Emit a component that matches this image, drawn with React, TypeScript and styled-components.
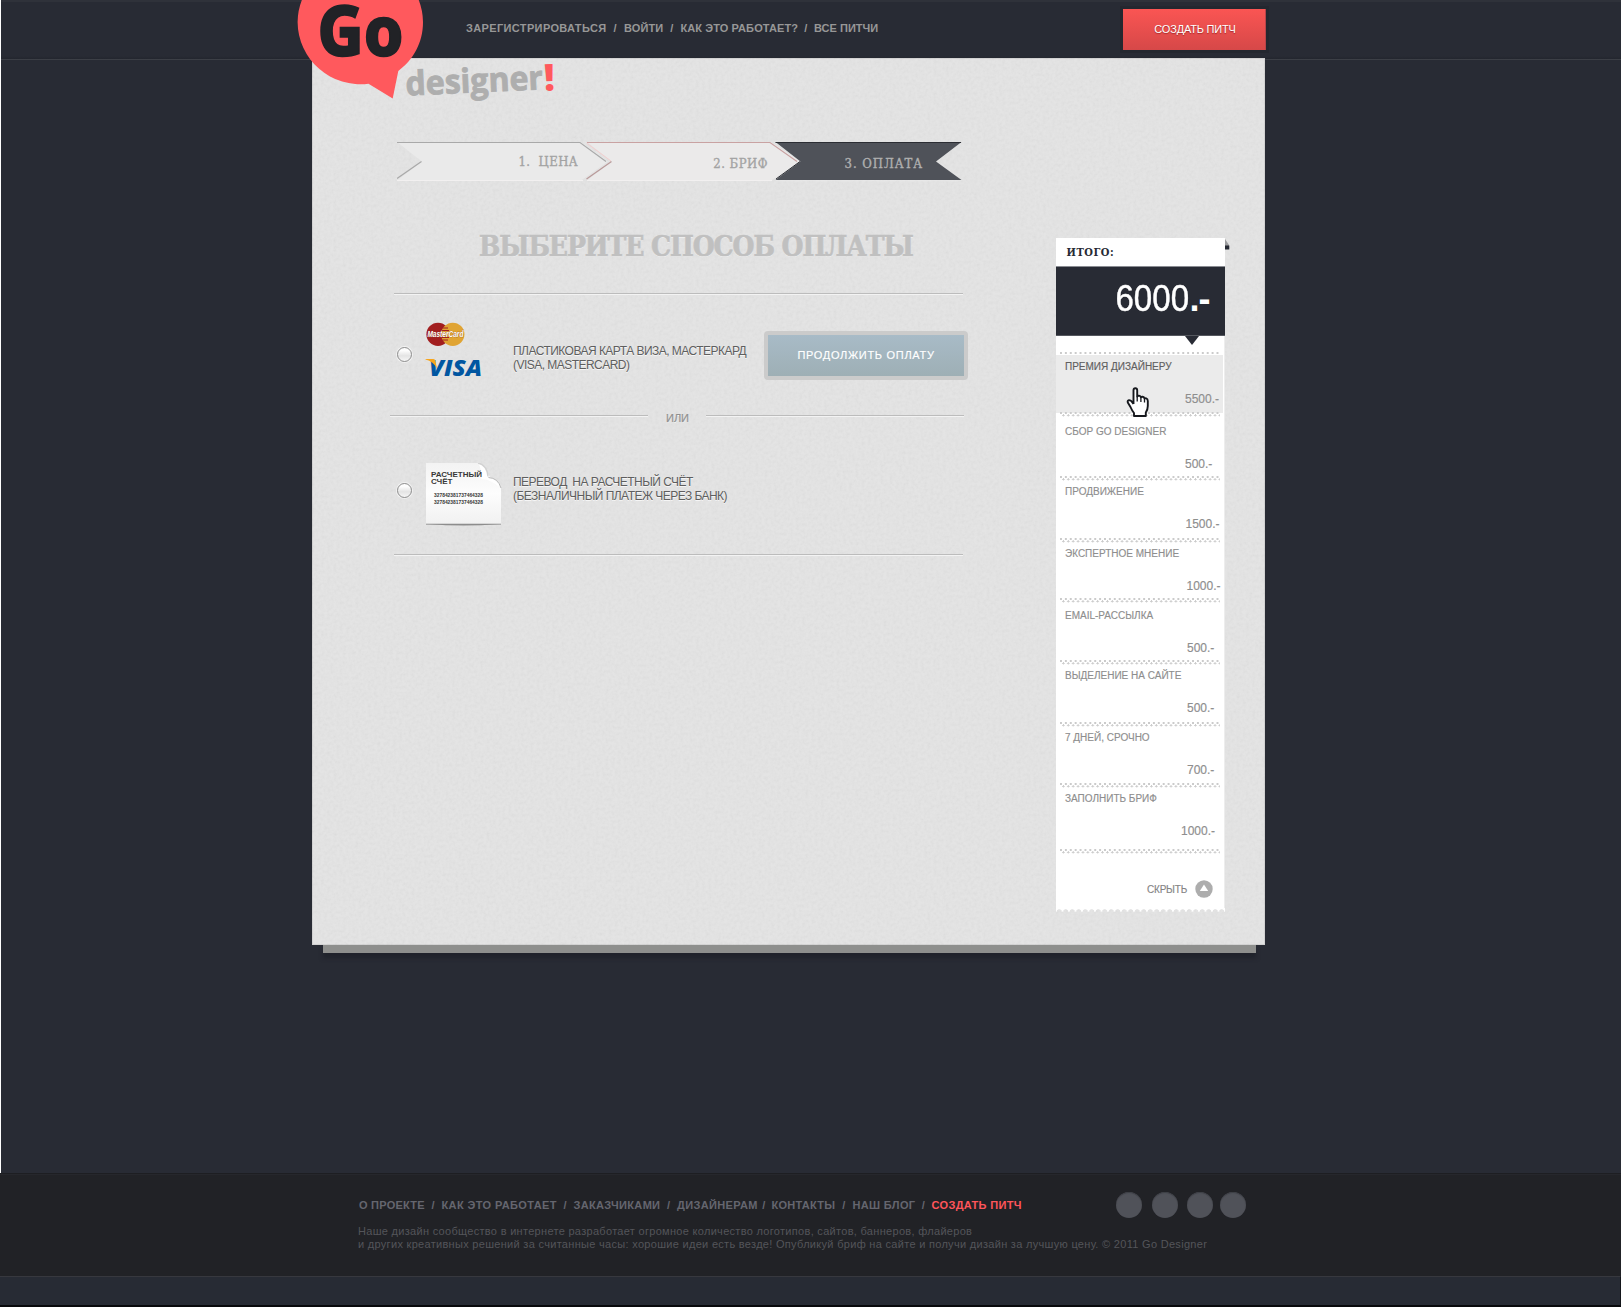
import { Fragment } from "react";
import styled, { createGlobalStyle, css } from "styled-components";

const SANS = `"Liberation Sans", Arial, sans-serif`;
const SLAB = `"DejaVu Serif Condensed", "DejaVu Serif", Rockwell, serif`;

const GlobalStyle = createGlobalStyle`
  *, *::before, *::after { box-sizing: border-box; }
  body {
    margin: 0;
    background: #272b34;
    font-family: ${SANS};
    overflow: hidden;
  }
`;

const Page = styled.div`
  width: 1621px;
  height: 1307px;
  display: flex;
  flex-direction: column;
  overflow: hidden;
`;

const Upper = styled.div`
  height: 1173px;
  flex: none;
  border-left: 1px solid #fff;
  background: #282b34;
`;

/* ---------- header ---------- */

const Header = styled.header`
  position: relative;
  height: 60px;
  display: flex;
  align-items: flex-start;
  padding-left: 465px;
  border-top: 2px solid #2f323a;
  border-bottom: 1px solid #3c3f46;
  background: linear-gradient(#282b34 54px, #23262e);
`;

const TopNav = styled.nav`
  display: flex;
  width: 657px;
  padding-top: 18px;
`;

const NavItem = styled.a<{ $w: number; $ls: number; $tone: string }>`
  width: ${(p) => p.$w}px;
  flex: none;
  font: bold 11px/16px ${SANS};
  letter-spacing: ${(p) => p.$ls}px;
  color: ${(p) => p.$tone};
  white-space: nowrap;
`;

const Slash = styled.span<{ $w: number; $tone: string }>`
  width: ${(p) => p.$w}px;
  flex: none;
  text-align: center;
  font: bold 11px/16px ${SANS};
  color: ${(p) => p.$tone};
`;

const CreateButton = styled.button`
  width: 143px;
  height: 41px;
  margin-top: 7px;
  padding: 0 0 1px 1px;
  border: 0;
  background: linear-gradient(#fa5553, #d64848);
  box-shadow: 0 0 0 3px #24272f, inset -1px 0 #b94448;
  color: #fff;
  font: 11px/14px ${SANS};
  letter-spacing: -0.2px;
  text-shadow: 0 1px 1px rgba(120, 20, 20, 0.6);
`;

const Logo = styled.svg`
  position: absolute;
  left: 279px;
  top: -2px;
  z-index: 3;
  overflow: visible;
`;

/* ---------- paper ---------- */

const Sheet = styled.main`
  position: relative;
  z-index: 1;
  display: flex;
  width: 953px;
  height: 887px;
  margin: -2px 0 0 311px;
  background: #e3e3e3;
  box-shadow: inset 0 0 0 1px #d2d2d2;
`;

const Grain = styled.svg`
  position: absolute;
  inset: 0;
  width: 100%;
  height: 100%;
  opacity: 0.06;
`;

const SheetFold = styled.div`
  width: 933px;
  height: 8px;
  margin-left: 322px;
  background: #8e8f8d;
  box-shadow: 0 5px 4px #20232b;
`;

const Payment = styled.section`
  position: relative;
  width: 580px;
  margin: 83px 0 0 78px;
`;

const Steps = styled.div`
  position: relative;
  display: flex;
  height: 40px;
  margin-left: 7px;
`;

const Ribbon = styled.svg`
  position: absolute;
  left: 0;
  top: 0;
`;

const Step = styled.div<{ $w: number; $end: number; $top: number; $ls: number; $active?: boolean }>`
  position: relative;
  width: ${(p) => p.$w}px;
  padding: ${(p) => p.$top}px ${(p) => p.$end}px 0 0;
  text-align: right;
  white-space: pre;
  font: 13px/16px ${SLAB};
  letter-spacing: ${(p) => p.$ls}px;
  color: ${(p) => (p.$active ? "#b0b0b0" : "#a3a3a3")};
  -webkit-text-stroke: 0.35px;
`;

const Title = styled.h1`
  margin: 50px 0 0 89px;
  font: bold 28px/32px ${SLAB};
  letter-spacing: -1.08px;
  white-space: nowrap;
  color: #c0c0c0;
  -webkit-text-stroke: 0.6px #c0c0c0;
  text-shadow: 0 1px 0 #f1f1f1;
`;

const rule = css`
  height: 2px;
  background: linear-gradient(#bcbcbc 50%, #f3f3f3 50%);
`;

const Rule = styled.div<{ $top?: number }>`
  ${rule}
  width: 569px;
  margin: ${(p) => p.$top ?? 0}px 0 0 4px;
`;

const OrRow = styled.div`
  display: flex;
  align-items: center;
  width: 574px;
  height: 14px;
  &::before {
    content: "";
    ${rule}
    width: 258px;
  }
  &::after {
    content: "";
    ${rule}
    width: 258px;
  }
`;

const OrText = styled.span`
  flex: 1;
  padding: 4px 0 0 1px;
  text-align: center;
  font: 11px/14px ${SANS};
  color: #909090;
  -webkit-text-stroke: 0.25px;
  text-shadow: 0 1px 0 #fff;
`;

const Option = styled.label<{ $h: number; $top: number }>`
  display: grid;
  grid-template-columns: 29px 87px 251px 204px;
  align-items: start;
  height: ${(p) => p.$h}px;
  padding: ${(p) => p.$top}px 0 0 7px;
`;

const Radio = styled.span<{ $top: number }>`
  width: 15px;
  height: 15px;
  margin-top: ${(p) => p.$top}px;
  border: 1px solid #8f8f8f;
  border-radius: 50%;
  background: linear-gradient(#fdfdfd 20%, #e4e4e4 60%, #f6f6f6);
  box-shadow: 0 0 0 1px rgba(255, 255, 255, 0.55);
`;

const OptionText = styled.span<{ $top: number }>`
  margin-top: ${(p) => p.$top}px;
  white-space: pre;
  font: 12px/14px ${SANS};
  letter-spacing: -0.53px;
  color: #5e5e5e;
  text-shadow: 0 1px 0 #f6f6f6;
`;

const PayButton = styled.button`
  width: 204px;
  height: 49px;
  margin-top: 9px;
  padding: 0 0 1px;
  border: 4px solid #cbcbcb;
  border-radius: 4px;
  background: linear-gradient(#a8bbc7, #9eafb5) padding-box;
  color: #fff;
  font: 11px/14px ${SANS};
  letter-spacing: 0.7px;
  -webkit-text-stroke: 0.15px;
`;

/* ---------- receipt ---------- */

const Receipt = styled.aside`
  position: relative;
  width: 169.5px;
  height: 674px;
  margin: 180px 0 0 85.5px;
`;

const Fold = styled.svg`
  position: absolute;
  left: 169.5px;
  top: 1px;
`;

const ReceiptHead = styled.div`
  height: 28px;
  padding: 8px 0 0 11px;
  background: #fff;
  font: bold 11px/14px ${SLAB};
  letter-spacing: 0.55px;
  color: #272a34;
`;

const Total = styled.div`
  position: relative;
  display: flex;
  justify-content: flex-end;
  height: 70px;
  padding: 13px 15.5px 0 0;
  background: #282b34;
  box-shadow: inset 0 1px #8a8c92, inset 0 -1px #55585f;
  color: #fff;
  font: 36px/40px ${SANS};
  &::after {
    content: "";
    position: absolute;
    right: 26px;
    top: 70px;
    border: solid transparent;
    border-width: 9px 7px 0;
    border-top-color: #282b34;
    z-index: 2;
  }
`;

const TotalSum = styled.span`
  transform: scaleX(0.92);
  transform-origin: right;
  -webkit-text-stroke: 0.4px;
`;

const TotalTail = styled.b`
  letter-spacing: -1px;
`;

const ReceiptBody = styled.div`
  height: 572px;
  padding-top: 16px;
  background: #fff;
  border-right: 1px solid #ededed;
`;

const Dots = styled.div<{ $single?: boolean }>`
  position: relative;
  z-index: 1;
  flex: none;
  width: 160px;
  height: ${(p) => (p.$single ? 2 : 5)}px;
  margin: ${(p) => (p.$single ? "0 0 -2px" : "-1px 0 -4px")} 4.5px;
  background:
    radial-gradient(circle at 1px 1px, #cbcbcb 0.9px, transparent 1.3px) 0 0 / 4.9px 5px,
    radial-gradient(circle at 3.4px 3.4px, #cbcbcb 0.9px, transparent 1.3px) 0 0 / 4.9px 5px;
`;

const Line = styled.div<{ $h: number; $hot?: boolean }>`
  display: flex;
  flex-direction: column;
  width: 167px;
  height: ${(p) => p.$h}px;
  background: ${(p) => (p.$hot ? "linear-gradient(#fff 3px, #ebebeb 3px)" : "none")};
`;

const LineLabel = styled.span<{ $top: number; $hot?: boolean }>`
  margin: ${(p) => p.$top}px 0 0 9.5px;
  font: 10px/12px ${SANS};
  color: ${(p) => (p.$hot ? "#606060" : "#8e8e8e")};
  -webkit-text-stroke: 0.15px;
  white-space: nowrap;
`;

const LinePrice = styled.span<{ $left: number }>`
  margin: 19px 0 0 ${(p) => p.$left}px;
  font: 12px/14px ${SANS};
  color: #8e8e8e;
  -webkit-text-stroke: 0.15px;
  white-space: nowrap;
`;

const HideRow = styled.button`
  display: flex;
  align-items: center;
  gap: 7.5px;
  height: 20px;
  margin: 29px 0 0 91.5px;
  padding: 0;
  border: 0;
  background: none;
  font: 10px/12px ${SANS};
  letter-spacing: -0.2px;
  color: #858585;
  -webkit-text-stroke: 0.15px;
`;

const HideLabel = styled.span`
  padding-top: 2px;
`;

const TornEdge = styled.div`
  height: 4px;
  background: radial-gradient(circle at 3.2px 4px, transparent 2.4px, #fff 3.1px) 0 0 / 6.5px 4px;
`;

const Pointer = styled.svg`
  position: absolute;
  left: 70.5px;
  top: 149px;
  z-index: 3;
`;

/* ---------- footer ---------- */

const Footer = styled.footer`
  display: flex;
  height: 103px;
  flex: none;
  padding-left: 358px;
  background: #212226;
  border-top: 1px solid #1d1e22;
  box-shadow: inset 0 1px #26272c;
`;

const FooterInfo = styled.div`
  width: 757.5px;
  padding-top: 23px;
`;

const FooterNav = styled.nav`
  display: flex;
  padding-left: 1px;
`;

const About = styled.p`
  margin: 12px 0 0;
  font: 11px/13px ${SANS};
  letter-spacing: 0.302px;
  color: #54555a;
  white-space: nowrap;
`;

const Socials = styled.div`
  display: flex;
  padding-top: 17.5px;
`;

const Social = styled.a<{ $gap: number }>`
  width: 26px;
  height: 26px;
  margin-left: ${(p) => p.$gap}px;
  border-radius: 50%;
  background: #505259;
  box-shadow: inset 0 1px 1px #3c3e44;
`;

const BottomBar = styled.div`
  height: 31px;
  background: #272b34;
  border-top: 1px solid #37383e;
  border-bottom: 2px solid #08090c;
  border-right: 1px solid #14161b;
`;

/* ---------- data ---------- */

type NavEntry = { text: string; w: number; ls: number; sep?: number; accent?: boolean };

const topNav: NavEntry[] = [
  { text: "ЗАРЕГИСТРИРОВАТЬСЯ", w: 140, ls: 0.36, sep: 18 },
  { text: "ВОЙТИ", w: 39, ls: 0.1, sep: 17.5 },
  { text: "КАК ЭТО РАБОТАЕТ?", w: 117, ls: 0.1, sep: 16.5 },
  { text: "ВСЕ ПИТЧИ", w: 65, ls: 0.03 },
];

const footerNav: NavEntry[] = [
  { text: "О ПРОЕКТЕ", w: 65.5, ls: 0.23, sep: 17 },
  { text: "КАК ЭТО РАБОТАЕТ", w: 115, ls: 0.39, sep: 17 },
  { text: "ЗАКАЗЧИКАМИ", w: 86.5, ls: 0.32, sep: 17 },
  { text: "ДИЗАЙНЕРАМ", w: 79, ls: 0.36, sep: 15.5 },
  { text: "КОНТАКТЫ", w: 63.5, ls: 0.26, sep: 17.5 },
  { text: "НАШ БЛОГ", w: 62.5, ls: 0.34, sep: 16.5 },
  { text: "СОЗДАТЬ ПИТЧ", w: 92, ls: 0.34, accent: true },
];

const lines = [
  { label: "ПРЕМИЯ ДИЗАЙНЕРУ", price: "5500.-", h: 61, top: 9, left: 129.5, hot: true },
  { label: "СБОР GO DESIGNER", price: "500.-", h: 64, top: 13, left: 129.5 },
  { label: "ПРОДВИЖЕНИЕ", price: "1500.-", h: 62, top: 9, left: 130 },
  { label: "ЭКСПЕРТНОЕ МНЕНИЕ", price: "1000.-", h: 60, top: 9, left: 131 },
  { label: "EMAIL-РАССЫЛКА", price: "500.-", h: 62, top: 11, left: 131.5 },
  { label: "ВЫДЕЛЕНИЕ НА САЙТЕ", price: "500.-", h: 62, top: 9, left: 131.5 },
  { label: "7 ДНЕЙ, СРОЧНО", price: "700.-", h: 61, top: 9, left: 131.5 },
  { label: "ЗАПОЛНИТЬ БРИФ", price: "1000.-", h: 66, top: 9, left: 125.5 },
];

function NavList({ items, tone, accent }: { items: NavEntry[]; tone: string; accent?: string }) {
  return (
    <>
      {items.map((item) => (
        <Fragment key={item.text}>
          <NavItem $w={item.w} $ls={item.ls} $tone={item.accent && accent ? accent : tone}>
            {item.text}
          </NavItem>
          {item.sep && (
            <Slash $w={item.sep} $tone={tone}>
              /
            </Slash>
          )}
        </Fragment>
      ))}
    </>
  );
}

function GoLogo() {
  return (
    <Logo width="300" height="110" viewBox="280 0 300 110">
      <path d="M360.3 -40A62.7 62.7 0 0 1 423 22C423 43 413 60 398.3 71L392.7 98.5 368.5 83.7A62.7 62.7 0 0 1 297.6 22 62.7 62.7 0 0 1 360.3 -40Z" fill="#ff595d" />
      <text x="317.5" y="56" fontFamily="Noto Sans, sans-serif" fontWeight="800" fontSize="70" textLength="86" lengthAdjust="spacingAndGlyphs" fill="#212226" stroke="#212226" strokeWidth="1.6">
        Go
      </text>
      <g transform="rotate(-2.6 406 95)">
        <text x="406" y="95.6" fontFamily="Open Sans, sans-serif" fontWeight="700" fontSize="33.5" textLength="137.5" lengthAdjust="spacingAndGlyphs" fill="#aeaeae" stroke="#aeaeae" strokeWidth="0.9">
          designer
        </text>
        <text x="544.5" y="97" fontFamily="Open Sans, sans-serif" fontWeight="800" fontSize="37" fill="#ff595d">
          !
        </text>
      </g>
    </Logo>
  );
}

function RibbonArt() {
  return (
    <Ribbon width="568" height="42" viewBox="0 0 568 42">
      <path d="M0 1H184L211 20.5 184 39.5H0L25 20.5Z" fill="#eaeaea" />
      <path d="M0 1.5H183L209 20.5" fill="none" stroke="#a9a9a9" strokeWidth="1.2" />
      <path d="M0 37.5L24.5 20.5" fill="none" stroke="#a9a9a9" strokeWidth="1.2" />
      <path d="M190 1H374L403 20.5 374 39.5H190L214.5 20.5Z" fill="#ebeaea" />
      <path d="M189.5 2L214 20" fill="none" stroke="#f3cfcf" strokeWidth="1" />
      <path d="M190 1.5H373L400 20.5" fill="none" stroke="#c9a2a2" strokeWidth="1.2" />
      <path d="M189.5 38L214.5 20.5" fill="none" stroke="#b99a9a" strokeWidth="1.2" />
      <path d="M0 39.5H186M190 39.5H375" stroke="#f2f0f0" strokeWidth="1" />
      <path d="M378.5 1H564.5L539 20.5 564.5 39H378.5L403.5 20.5Z" fill="#4f5259" />
      <path d="M378.5 1.5H564" stroke="#2b2d33" strokeWidth="1.2" />
      <path d="M379 38L403 20.5" stroke="#2b2d33" strokeWidth="1" />
      <path d="M379 39.8H564.5" stroke="#ededed" strokeWidth="0.6" />
    </Ribbon>
  );
}

const LogoArt = styled.svg`
  overflow: visible;
`;

function CardLogos() {
  return (
    <LogoArt width="60" height="56" viewBox="0 0 60 56">
      <circle cx="12" cy="12.3" r="11.6" fill="#a21e1f" />
      <circle cx="26.8" cy="12.3" r="11.6" fill="#e0a433" />
      <path d="M15.5 8.5h7.5M15.5 15.5h7.5M16.5 18h5.5M16.5 6h5.5" stroke="#a21e1f" strokeWidth="1" />
      <text x="1.4" y="15.4" fontFamily="Liberation Sans, sans-serif" fontWeight="bold" fontStyle="italic" fontSize="8.6" textLength="36" lengthAdjust="spacingAndGlyphs" fill="#fff" stroke="#8a4a30" strokeWidth="0.5" paintOrder="stroke">
        MasterCard
      </text>
      <text x="3" y="53.7" fontFamily="Open Sans, sans-serif" fontWeight="800" fontStyle="italic" fontSize="23.5" textLength="53" lengthAdjust="spacingAndGlyphs" fill="#0156a1">
        VISA
      </text>
      <path d="M-0.5 37H7.4Q9 37 9.3 38.6L11 46.5Q7.5 39.5 -0.5 37.4Z" fill="#f7a51c" />
    </LogoArt>
  );
}

function InvoiceSheet() {
  return (
    <svg width="78" height="68" viewBox="0 0 78 68">
      <defs>
        <linearGradient id="paper" x1="0" y1="0" x2="0" y2="1">
          <stop offset="0" stopColor="#f3f3f3" />
          <stop offset="0.5" stopColor="#fdfdfd" />
          <stop offset="1" stopColor="#f1f1f1" />
        </linearGradient>
      </defs>
      <path d="M2 61H73Q38 64 2 61Z" fill="#8d8d8d" />
      <path d="M0 0H52Q59 2 61 8 62 13 66 15.5 73 18 75 25V61H0Z" fill="url(#paper)" />
      <path d="M52 0Q60.5 2 62.5 14.5 72 15 75 25 62 15 55.5 16.5 56 6 52 0Z" fill="#fff" />
      <path d="M52 0Q61 2 62 13.5" fill="none" stroke="#d2d2d2" strokeWidth="1.4" />
      <path d="M62.5 14.5Q72 15 75 25" fill="none" stroke="#b9b9b9" strokeWidth="1" />
      <path d="M0 61.2H75" stroke="#8f8f8f" strokeWidth="0.9" />
      <g fontFamily="Liberation Sans, sans-serif" fontWeight="bold" fill="#383838">
        <text x="5" y="14" fontSize="8" textLength="51">РАСЧЕТНЫЙ</text>
        <text x="5" y="20.8" fontSize="8" textLength="21.5" lengthAdjust="spacingAndGlyphs">СЧЁТ</text>
        <text x="8" y="33.5" fontSize="5.5" textLength="49" lengthAdjust="spacingAndGlyphs">327842381737464328</text>
        <text x="8" y="41.2" fontSize="5.5" textLength="49" lengthAdjust="spacingAndGlyphs">327842381737464328</text>
      </g>
    </svg>
  );
}

function HandPointer() {
  return (
    <Pointer width="24" height="31" viewBox="0 0 24 31">
      <path
        d="M7.5 17V3.2Q7.5 1.2 9.3 1.2 11.2 1.2 11.2 3.2V9.5Q11.6 8.6 13 8.6 14.6 8.7 14.9 10.4 15.5 9.7 16.6 9.8 18.2 10 18.5 11.6 19.2 11.1 20.2 11.4 21.8 12 21.8 14V19Q21.8 22.5 19.8 25.5V29H8V26Q6 23.5 4.5 20L1.8 15.5Q1.2 13.6 3 13.1 4.6 13 5.6 14.4L7.5 17"
        fill="#fff"
        stroke="#16181d"
        strokeWidth="1.9"
        strokeLinejoin="round"
      />
      <path d="M11.2 9.5V14.5M14.9 10.5V15M18.5 11.5V15.5" stroke="#16181d" strokeWidth="1.3" />
    </Pointer>
  );
}

export default function App() {
  return (
    <Page>
      <GlobalStyle />
      <Upper>
        <Header>
          <TopNav>
            <NavList items={topNav} tone="#979797" />
          </TopNav>
          <CreateButton>СОЗДАТЬ ПИТЧ</CreateButton>
          <GoLogo />
        </Header>

        <Sheet>
          <Grain>
            <filter id="grain">
              <feTurbulence type="fractalNoise" baseFrequency="0.32" numOctaves="3" seed="4" />
              <feColorMatrix values="1.2 0 0 0 0.1  1.2 0 0 0 0.1  1.2 0 0 0 0.1  0 0 0 0 1" />
            </filter>
            <rect width="100%" height="100%" filter="url(#grain)" />
          </Grain>

          <Payment>
            <Steps>
              <RibbonArt />
              <Step $w={183} $end={2} $top={13} $ls={0.4}>1.  ЦЕНА</Step>
              <Step $w={190} $end={2} $top={15} $ls={0.5}>2. БРИФ</Step>
              <Step $w={191} $end={38} $top={15} $ls={0.95} $active>3. ОПЛАТА</Step>
            </Steps>
            <Title>ВЫБЕРИТЕ СПОСОБ ОПЛАТЫ</Title>

            <Rule $top={30} />
            <Option $h={114} $top={27}>
              <Radio $top={25} />
              <CardLogos />
              <OptionText $top={22}>{"ПЛАСТИКОВАЯ КАРТА ВИЗА, МАСТЕРКАРД\n(VISA, MASTERCARD)"}</OptionText>
              <PayButton>ПРОДОЛЖИТЬ ОПЛАТУ</PayButton>
            </Option>

            <OrRow>
              <OrText>ИЛИ</OrText>
            </OrRow>

            <Option $h={131} $top={40}>
              <Radio $top={20} />
              <InvoiceSheet />
              <OptionText $top={12}>{"ПЕРЕВОД  НА РАСЧЕТНЫЙ СЧЁТ\n(БЕЗНАЛИЧНЫЙ ПЛАТЕЖ ЧЕРЕЗ БАНК)"}</OptionText>
            </Option>
            <Rule />
          </Payment>

          <Receipt>
            <Fold width="5" height="11" viewBox="0 0 5 11">
              <path d="M0 0L4 6V7H0Z" fill="#9b9c9e" />
              <path d="M0 6.5H4.3V10.5H0Z" fill="#262a33" />
            </Fold>
            <ReceiptHead>ИТОГО:</ReceiptHead>
            <Total>
              <TotalSum>6000</TotalSum>
              <TotalTail>.-</TotalTail>
            </Total>
            <ReceiptBody>
              {lines.map((line) => (
                <Fragment key={line.label}>
                  <Dots $single={line.hot} />
                  <Line $h={line.h} $hot={line.hot}>
                    <LineLabel $top={line.top} $hot={line.hot}>{line.label}</LineLabel>
                    <LinePrice $left={line.left}>{line.price}</LinePrice>
                  </Line>
                </Fragment>
              ))}
              <Dots />
              <HideRow>
                <HideLabel>СКРЫТЬ</HideLabel>
                <svg width="18" height="18" viewBox="0 0 18 18">
                  <circle cx="9" cy="9" r="8.7" fill="#adadad" />
                  <path d="M9 4.6L13.2 11H4.800Z" fill="#fff" />
                </svg>
              </HideRow>
            </ReceiptBody>
            <TornEdge />
            <HandPointer />
          </Receipt>
        </Sheet>
        <SheetFold />
      </Upper>

      <Footer>
        <FooterInfo>
          <FooterNav>
            <NavList items={footerNav} tone="#65666f" accent="#ff555a" />
          </FooterNav>
          <About>
            Наше дизайн сообщество в интернете разработает огромное количество логотипов, сайтов, баннеров, флайеров
            <br />и других креативных решений за считанные часы: хорошие идеи есть везде! Опубликуй бриф на сайте и получи дизайн за лучшую цену. © 2011 Go Designer
          </About>
        </FooterInfo>
        <Socials>
          <Social $gap={0} />
          <Social $gap={10} />
          <Social $gap={9} />
          <Social $gap={7.5} />
        </Socials>
      </Footer>
      <BottomBar />
    </Page>
  );
}
